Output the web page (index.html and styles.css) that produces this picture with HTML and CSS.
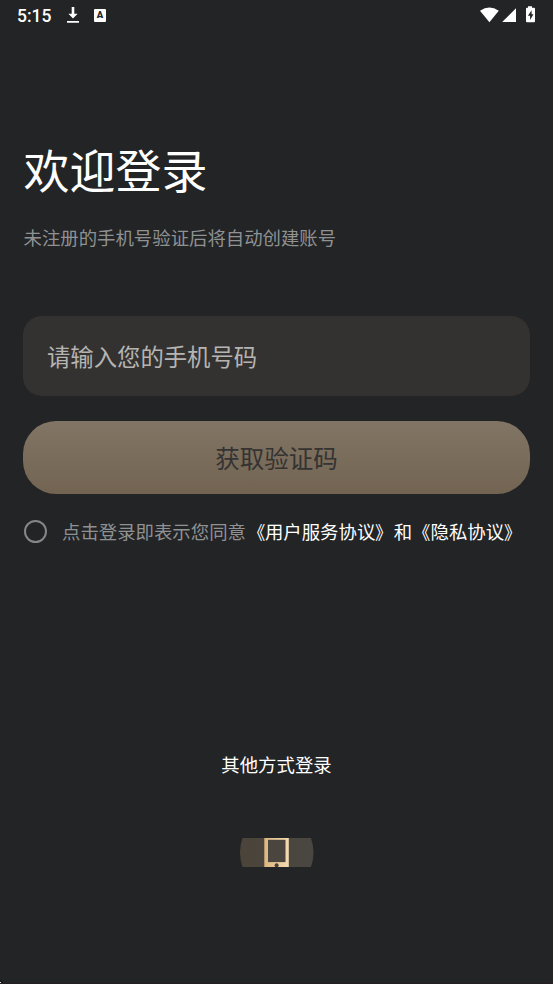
FILE: index.html
```html
<!DOCTYPE html>
<html lang="zh-CN">
<head>
<meta charset="utf-8">
<title>欢迎登录</title>
<link rel="stylesheet" href="styles.css">
</head>
<body>
<main class="screen">
  <header class="status">
    <span class="time">5:15</span>
    <svg class="download" width="14" height="18" viewBox="0 0 14 18"><path d="M5.700 1h2.600v6.800h3.300L7 12.600 2.400 7.800h3.300zM1 15h12v1.700H1z" fill="#fff"/></svg>
    <span class="badge">A</span>
    <svg class="system" width="58" height="18" viewBox="0 0 58 18">
      <path d="M1 4.700Q10.400-1.700 19.800 4.700L10.400 16.300z" fill="#fff"/>
      <path d="M37 2.200V16H23.200z" fill="#fff"/>
      <path d="M49 .2h4v1.600h2q1 0 1 1v12.400q0 1-1 1h-7q-1 0-1-1V2.800q0-1 1-1h1z" fill="#fff"/>
      <path d="M52.600 4.200l-3.700 5.500h2.200v4.200l3.400-5.600h-1.900z" fill="#222426"/>
    </svg>
  </header>
  <h1 class="title">欢迎登录</h1>
  <p class="subtitle">未注册的手机号验证后将自动创建账号</p>
  <form class="form">
    <div class="phone">请输入您的手机号码</div>
    <button class="submit" type="button">获取验证码</button>
    <div class="terms">
      <span class="radio"></span>
      <span class="agreement">点击登录即表示您同意<span class="link"><span class="open">《</span>用户服务协议<span class="close">》</span>和<span class="open">《</span>隐私协议<span class="close">》</span></span></span>
    </div>
  </form>
  <section class="other">
    <p class="other-title">其他方式登录</p>
    <svg class="phone-login" width="74" height="29" viewBox="0 0 74 29">
      <defs>
        <linearGradient id="disc"><stop stop-color="#4b443a"/><stop offset="1" stop-color="#4a4742"/></linearGradient>
        <linearGradient id="gold"><stop stop-color="#dcb67f"/><stop offset="1" stop-color="#f4dbb0"/></linearGradient>
      </defs>
      <path d="M2.500 0H71Q76 14.500 71 29H2.500Q-2.500 14.500 2.500 0z" fill="url(#disc)"/>
      <path d="M24.300 0h24.500v29H24.300z" fill="url(#gold)"/>
      <path d="M28 1.800h17.500v22.300H28z" fill="#4a453e"/>
      <circle cx="36.600" cy="27.200" r="2" fill="#4a4036"/>
    </svg>
  </section>
  <svg class="corner" width="4" height="4" viewBox="0 0 4 4"><path d="M0 0L4 4H0z" fill="#000"/><path d="M0 1.500L2.500 4H0z" fill="#fff"/></svg>
</main>
</body>
</html>
```
FILE: styles.css
```css
* { box-sizing: border-box; }
body {
  margin: 0;
  background: #222426;
  color: #fff;
  font-family: "Noto Sans CJK SC", sans-serif;
}
h1, p { margin: 0; font-weight: 400; }
svg { display: block; }
.screen {
  position: relative;
  height: 984px;
  padding: 0 23px;
  border-bottom: 1px solid #251d20;
  overflow: hidden;
}
.status {
  height: 32px;
  margin: 0 -6px;
  display: flex;
  align-items: flex-start;
  padding-top: 6px;
}
.time {
  width: 49px;
  font: 500 17.5px/20px Roboto, sans-serif;
}
.badge {
  width: 12px;
  height: 13px;
  margin: 3px 0 0 14px;
  border-radius: 1px;
  background: #fff;
  color: #222426;
  font: 900 9.500px/12px Roboto, sans-serif;
  text-align: center;
}
.system { margin-left: auto; margin-right: -1px; }
.title {
  margin-top: 102px;
  padding-left: 0.500px;
  font-size: 46px;
  line-height: 68px;
}
.subtitle {
  margin-top: 21px;
  padding-left: 0.500px;
  color: #909192;
  font-size: 18.400px;
  line-height: 28px;
}
.form { margin-top: 65px; }
.phone {
  height: 80px;
  padding-left: 24px;
  border-radius: 19px;
  background: #343230;
  color: #b5b4b3;
  font-size: 23.350px;
  line-height: 80px;
}
.submit {
  display: block;
  width: 100%;
  height: 73.500px;
  margin-top: 24.700px;
  padding: 0;
  border: 0;
  border-radius: 33px;
  background: linear-gradient(#817565, #736452);
  color: #343331;
  font: 400 24.500px/74px "Noto Sans CJK SC", sans-serif;
}
.terms {
  display: flex;
  align-items: center;
  height: 28px;
  margin-top: 23.800px;
  padding-left: 1px;
  color: #909192;
  font-size: 18.400px;
  line-height: 28px;
  white-space: nowrap;
}
.agreement { margin-top: -2px; }
.radio {
  width: 23px;
  height: 23px;
  margin-right: 15px;
  border: 2px solid #858687;
  border-radius: 50%;
}
.link { color: #fff; margin-left: 0.600px; }
.open, .close {
  display: inline-block;
  transform: scaleX(0.940);
}
.open { transform-origin: right; }
.close { transform-origin: left; }
.other {
  display: flex;
  flex-direction: column;
  align-items: center;
  margin-top: 204px;
}
.other-title {
  font-size: 18.400px;
  line-height: 28px;
}
.phone-login { margin-top: 60px; }
.corner {
  position: absolute;
  left: 0;
  bottom: -1px;
}
```
